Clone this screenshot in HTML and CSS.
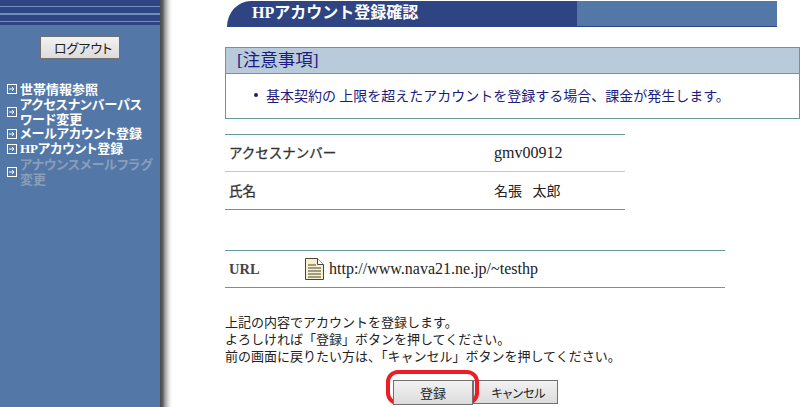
FILE: index.html
```html
<!DOCTYPE html>
<html lang="ja">
<head>
<meta charset="utf-8">
<title>HPアカウント登録確認</title>
<link rel="stylesheet" href="styles.css">
</head>
<body>
<div class="page">
  <aside class="side">
    <div class="stripes"></div>
    <div class="logout-wrap"><button class="btn logout">ログアウト</button></div>
    <ul class="menu">
      <li><svg class="mi" viewBox="0 0 10 10"><rect x=".5" y=".5" width="9" height="9" fill="none" stroke="#fff"/><path d="M2 5h5M5 3l2 2-2 2" fill="none" stroke="#fff"/></svg><span>世帯情報参照</span></li>
      <li><svg class="mi" viewBox="0 0 10 10"><rect x=".5" y=".5" width="9" height="9" fill="none" stroke="#fff"/><path d="M2 5h5M5 3l2 2-2 2" fill="none" stroke="#fff"/></svg><span>アクセスナンバーパス<br>ワード変更</span></li>
      <li><svg class="mi" viewBox="0 0 10 10"><rect x=".5" y=".5" width="9" height="9" fill="none" stroke="#fff"/><path d="M2 5h5M5 3l2 2-2 2" fill="none" stroke="#fff"/></svg><span>メールアカウント登録</span></li>
      <li><svg class="mi" viewBox="0 0 10 10"><rect x=".5" y=".5" width="9" height="9" fill="none" stroke="#fff"/><path d="M2 5h5M5 3l2 2-2 2" fill="none" stroke="#fff"/></svg><span><b class="latin">HP</b>アカウント登録</span></li>
      <li class="off"><svg class="mi" viewBox="0 0 10 10"><rect x=".5" y=".5" width="9" height="9" fill="none" stroke="#fff"/><path d="M2 5h5M5 3l2 2-2 2" fill="none" stroke="#fff"/></svg><span>アナウンスメールフラグ<br>変更</span></li>
    </ul>
  </aside>
  <div class="shade"></div>
  <main class="main">
    <div class="title"><h1>HPアカウント登録確認</h1><div class="title-rest"></div></div>
    <section class="notice">
      <h2>[注意事項]</h2>
      <ul><li>基本契約の 上限を超えたアカウントを登録する場合、課金が発生します。</li></ul>
    </section>
    <table class="info">
      <tr><th>アクセスナンバー</th><td>gmv00912</td></tr>
      <tr><th>氏名</th><td class="name">名張&nbsp;&nbsp;&nbsp;太郎</td></tr>
    </table>
    <div class="url">
      <span class="url-label">URL</span>
      <svg class="doc" viewBox="0 0 19 22"><path d="M.5.500h12l6 6v15H.5z" fill="#f7f0cf" stroke="#4a4636"/><path d="M12.500.5v6h6" fill="#fff" stroke="#4a4636"/><path d="M3 7h8M3 10h13M3 13h13M3 16h13M3 19h13" stroke="#4a4636"/></svg>
      <span class="url-text">http://www.nava21.ne.jp/~testhp</span>
    </div>
    <p class="msg">上記の内容でアカウントを登録します。<br>よろしければ「登録」ボタンを押してください。<br>前の画面に戻りたい方は、「キャンセル」ボタンを押してください。</p>
    <div class="actions">
      <span class="hl"><button class="btn submit">登録</button></span>
      <button class="btn cancel">キャンセル</button>
    </div>
  </main>
</div>
</body>
</html>
```
FILE: styles.css
```css
* { box-sizing: border-box; }
html, body { margin: 0; padding: 0; height: 407px; overflow: hidden; background: #fff; }
body { font-family: "Noto Sans CJK JP", "Liberation Sans", sans-serif; font-size: 13px; color: #222; }
.page { display: flex; height: 407px; }
.side { width: 160px; background: #5378a8; flex: none; }
.shade { width: 12px; flex: none; background: linear-gradient(to right, #4a4a4a 0, #5a5a5a 20%, #a8a8a8 45%, #e4e4e4 75%, #fff 100%); }
.stripes { height: 25px; background: repeating-linear-gradient(to bottom, #2f4482 0, #2f4482 6px, #6f8fc0 6px, #6f8fc0 7.500px); border-bottom: 1px solid #2f4482; }
.logout-wrap { display: flex; justify-content: center; padding-top: 11px; }
.btn { font-family: "Noto Sans CJK JP", sans-serif; font-size: 13px; color: #222; border: 1px solid #707070; background: linear-gradient(#f2f2f2, #dcdcdc); padding: 0; font-feature-settings: "palt"; }
.logout { width: 80px; height: 23px; padding-left: 6px; }
.menu { list-style: none; margin: 23px 0 0; padding: 0 0 0 7px; color: #fff; font-weight: 700; font-size: 13px; line-height: 14.800px; font-feature-settings: "palt"; }
.menu li { display: flex; align-items: center; gap: 3px; }
.menu .off { color: #8a9db8; }
.latin { font-family: "Liberation Serif", serif; }
.mi { width: 10px; height: 10px; flex: none; }
.main { flex: 1; padding: 1px 26px 0 53px; min-width: 0; }
.title { display: flex; height: 26px; width: 550px; margin-left: 2px; }
.title h1 { margin: 0; width: 350px; height: 26px; background: #2f4482; border-top-left-radius: 24px 26px; color: #fff; font-family: "Liberation Serif", "Noto Sans CJK JP", serif; font-size: 16px; line-height: 24px; padding-left: 25px; font-weight: 700; }
.title-rest { flex: 1; background: #5378a8; border-bottom: 1px solid #2f4482; }
.notice { width: 575px; height: 72px; margin-top: 20px; border: 1px solid #669999; display: flex; flex-direction: column; }
.notice h2 { margin: 0; height: 26px; background: #b9cadb; border-bottom: 1px solid #669999; color: #1c1c80; font-family: "Liberation Serif", "Noto Sans CJK JP", serif; font-size: 17.500px; font-weight: 400; line-height: 25px; padding-left: 11px; flex: none; }
.notice ul { margin: 0; padding: 13px 0 0 28px; color: #1c1c80; font-size: 14px; line-height: 16px; list-style: none; }
.notice li { position: relative; padding-left: 12px; }
.notice li::before { content: ""; position: absolute; left: 0; top: 6px; width: 4px; height: 4px; border-radius: 50%; background: #1c1c80; }
.info { width: 400px; margin-top: 15px; border-collapse: collapse; border-top: 1px solid #669999; border-bottom: 1px solid #669999; }
.info th, .info td { height: 37px; padding: 0 0 3px 4px; text-align: left; font-family: "Liberation Serif", "Noto Sans CJK JP", serif; }
.info th { width: 265px; font-weight: 400; font-size: 13.500px; -webkit-text-stroke: .3px #333; color: #333; }
.info tr + tr th, .info tr + tr td { border-top: 1px solid #b9cadb; height: 38px; padding-bottom: 2px; }
.info td { font-size: 16px; padding-bottom: 1px; }
.info td.name { font-size: 14px; }
.url { width: 500px; height: 38px; margin-top: 40px; border-top: 1px solid #669999; border-bottom: 1px solid #669999; display: flex; align-items: center; }
.url-label { width: 80px; padding-left: 4px; font-family: "Liberation Serif", serif; font-weight: 700; font-size: 14.500px; color: #444; }
.doc { width: 19px; height: 22px; flex: none; margin-right: 5px; }
.url-text { font-family: "Liberation Serif", serif; font-size: 16px; color: #222; }
.msg { margin: 25px 0 0; font-size: 13px; line-height: 17px; color: #222; }
.actions { display: flex; align-items: flex-start; margin: 6px 0 0 161px; }
.hl { display: flex; position: relative; z-index: 1; width: 93px; height: 35px; padding: 6px 2px 0 3px; border: 4px solid #ee1c25; border-radius: 12px; margin-right: -6px; align-items: flex-start; }
.submit { width: 80px; height: 25px; flex: none; }
.cancel { width: 85px; height: 24px; margin-top: 10px; flex: none; font-size: 12px; padding-left: 6px; }
```
